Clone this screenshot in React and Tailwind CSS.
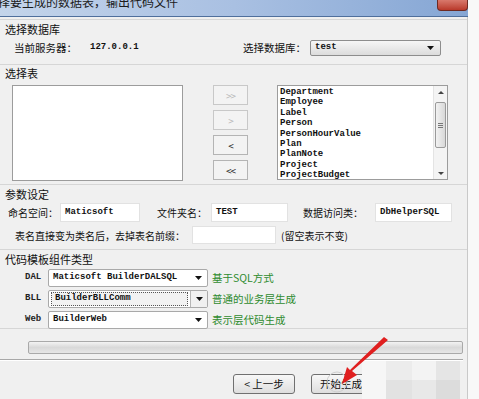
import React from "react";

const cjk = { fontFamily: '"Noto Sans CJK SC", "Noto Sans", sans-serif' };
const mono = { fontFamily: '"Liberation Mono", "DejaVu Sans Mono", monospace' };

const Arrow = () => (
  <svg width="7" height="4" viewBox="0 0 7 4" className="block">
    <path d="M0 0 H7 L3.5 4 Z" fill="#111" />
  </svg>
);

const GroupLabel = ({ children }) => (
  <div className="h-[14px] leading-[14px] text-[11px] text-[#111] pl-[5px] whitespace-nowrap" style={cjk}>
    {children}
  </div>
);

const TextBox = ({ w, h = "h-[19px]", value }) => (
  <div
    className={`${w} ${h} shrink-0 bg-white border border-[#e2e2e2] flex items-center pl-[4px] text-[9px] font-bold text-[#111] whitespace-nowrap`}
    style={mono}
  >
    {value}
  </div>
);

const MoveBtn = ({ label, disabled }) => (
  <div
    className={`h-[20px] w-[35px] border ${disabled ? "border-[#c8c8c8] text-[#b8b8b8]" : "border-[#b4b4b4] text-[#222]"} bg-[#f3f3f3] flex items-center justify-center text-[10px] tracking-[-1px]`}
    style={cjk}
  >
    {label}
  </div>
);

const TplRow = ({ name, value, note, focused }) => (
  <div className="flex items-center h-[18px] pl-[25px]">
    <div className="w-[23px] shrink-0 text-[9px] font-bold text-[#222]" style={mono}>
      {name}
    </div>
    <div className="w-[160px] shrink-0 h-[18px] bg-white border border-[#a9a9a9] rounded-[2px] flex items-center">
      {focused ? (
        <>
          <div className="flex-1 h-[14px] mx-[2px] border border-dotted border-[#555] bg-[#f2f2f2] flex items-center pl-[3px] text-[9px] font-bold text-[#111] whitespace-nowrap" style={mono}>
            {value}
          </div>
          <div className="w-[17px] h-[16px] border-l border-[#b5b5b5] bg-[#f0f0f0] flex items-center justify-center">
            <Arrow />
          </div>
        </>
      ) : (
        <>
          <div className="flex-1 pl-[4px] text-[9px] font-bold text-[#111] whitespace-nowrap" style={mono}>
            {value}
          </div>
          <div className="w-[17px] flex items-center justify-center">
            <Arrow />
          </div>
        </>
      )}
    </div>
    <div className="ml-[4px] text-[10.5px] text-[#2e8b2e] whitespace-nowrap" style={cjk}>
      {note}
    </div>
  </div>
);

const tables = [
  "Department",
  "Employee",
  "Label",
  "Person",
  "PersonHourValue",
  "Plan",
  "PlanNote",
  "Project",
  "ProjectBudget",
];

export default function App() {
  return (
    <div className="w-[479px] h-[399px] bg-[#f0f0f0] flex overflow-hidden relative">
      <div className="w-[468px] flex flex-col">
        {/* title bar */}
        <div className="h-[17px] relative overflow-hidden bg-gradient-to-r from-[#c3d4ea] via-[#a9c0e2] to-[#85a6d4] border-b border-[#4f6f9c]">
          <div className="-mt-[6px] -ml-[14px] text-[12px] leading-[16px] text-[#1b1b1b] whitespace-nowrap" style={cjk}>
            选择要生成的数据表，输出代码文件
          </div>
          <div className="absolute top-0 left-[437px] w-[31px] h-[11px] bg-gradient-to-b from-[#d8786c] to-[#b9382a] border border-t-0 border-[#6e2a22] rounded-b-[4px]" />
        </div>

        <div className="flex-1 flex flex-col border-r border-[#c9c9c9]">
          {/* group 1 */}
          <div className="h-[45px] border-t border-[#d6d6d6] mt-[2px] pt-[2px]">
            <GroupLabel>选择数据库</GroupLabel>
            <div className="flex items-center h-[16px] mt-[4px] pl-[14px] text-[10.5px] text-[#111] whitespace-nowrap" style={cjk}>
              <div className="w-[76px] shrink-0">当前服务器：</div>
              <div className="w-[153px] shrink-0 text-[9px] font-bold" style={mono}>127.0.0.1</div>
              <div className="w-[67px] shrink-0">选择数据库：</div>
              <div className="w-[131px] shrink-0 h-[16px] rounded-[2px] border border-[#8d8d8d] bg-gradient-to-b from-[#f6f6f6] to-[#dcdcdc] flex items-center pl-[4px] pr-[6px]">
                <div className="flex-1 text-[9px] font-bold" style={mono}>test</div>
                <Arrow />
              </div>
            </div>
          </div>

          {/* group 2 */}
          <div className="h-[120px] border-t border-[#d6d6d6] pt-[1px]">
            <GroupLabel>选择表</GroupLabel>
            <div className="flex mt-[5px] pl-[12px]">
              <div className="w-[171px] h-[96px] bg-white border border-[#9c9c9c]" />
              <div className="ml-[30px] flex flex-col gap-[5px]">
                <MoveBtn label=">>" disabled />
                <MoveBtn label=">" disabled />
                <MoveBtn label="<" />
                <MoveBtn label="<<" />
              </div>
              <div className="ml-[29px] w-[171px] h-[95px] bg-white border border-[#9c9c9c] flex">
                <div className="flex-1 pl-[2px] pt-[1px] text-[9px] font-bold leading-[10.4px] text-[#111]" style={mono}>
                  {tables.map((t) => (
                    <div key={t}>{t}</div>
                  ))}
                </div>
                <div className="w-[14px] bg-[#f4f4f4] border-l border-[#e4e4e4] flex flex-col items-center">
                  <div className="h-[12px] flex items-center">
                    <svg width="6" height="3" viewBox="0 0 6 3"><path d="M0 3 L3 0 L6 3 Z" fill="#444" /></svg>
                  </div>
                  <div className="w-[11px] h-[46px] mt-[4px] rounded-[2px] border border-[#9a9a9a] bg-gradient-to-r from-[#f2f2f2] to-[#d8d8d8] flex items-center justify-center">
                    <div className="w-[5px] h-[5px] border-y border-[#777] flex items-center"><div className="w-full h-px bg-[#777]" /></div>
                  </div>
                  <div className="flex-1" />
                  <div className="h-[12px] flex items-center">
                    <svg width="6" height="3" viewBox="0 0 6 3"><path d="M0 0 L6 0 L3 3 Z" fill="#444" /></svg>
                  </div>
                </div>
              </div>
            </div>
          </div>

          {/* group 3 */}
          <div className="h-[65px] border-t border-[#d6d6d6] pt-[2px]">
            <GroupLabel>参数设定</GroupLabel>
            <div className="flex items-center mt-[2px] pl-[8px] text-[10px] text-[#111] whitespace-nowrap" style={cjk}>
              <div className="w-[52px] shrink-0">命名空间：</div>
              <TextBox w="w-[80px]" value="Maticsoft" />
              <div className="w-[54px] shrink-0 ml-[17px]">文件夹名：</div>
              <TextBox w="w-[77px]" value="TEST" />
              <div className="w-[72px] shrink-0 ml-[15px]">数据访问类：</div>
              <TextBox w="w-[77px]" value="DbHelperSQL" />
            </div>
            <div className="flex items-center mt-[4px] pl-[15px] text-[10px] text-[#111] whitespace-nowrap" style={cjk}>
              <div className="w-[177px] shrink-0">表名直接变为类名后，去掉表名前缀：</div>
              <TextBox w="w-[84px]" h="h-[18px]" value="" />
              <div className="ml-[5px]">(留空表示不变)</div>
            </div>
          </div>

          {/* group 4 */}
          <div className="h-[80px] border-y border-[#d6d6d6] pt-[2px]">
            <GroupLabel>代码模板组件类型</GroupLabel>
            <div className="flex flex-col gap-[3px] mt-[3px]">
              <TplRow name="DAL" value="Maticsoft BuilderDALSQL" note="基于SQL方式" />
              <TplRow name="BLL" value="BuilderBLLComm" note="普通的业务层生成" focused />
              <TplRow name="Web" value="BuilderWeb" note="表示层代码生成" />
            </div>
          </div>

          {/* progress */}
          <div className="pl-[28px] mt-[12px]">
            <div className="w-[435px] h-[13px] rounded-[2px] border border-[#a9a9a9] bg-gradient-to-b from-[#f3f3f3] via-[#d9d9d9] to-[#e6e6e6]" />
          </div>
          <div className="mt-[5px] w-[463px] h-[2px] border-t border-[#a8a8a8] bg-white" />

          {/* buttons */}
          <div className="flex mt-[13px] pl-[233px]">
            <div className="w-[62px] h-[20px] rounded-[3px] border border-[#707070] bg-gradient-to-b from-[#f8f8f8] to-[#dedede] flex items-center justify-center text-[10.5px] text-[#111] whitespace-nowrap" style={cjk}>
              &lt; 上一步
            </div>
            <div className="ml-[16px] w-[62px] h-[20px] rounded-[3px] border border-[#707070] bg-gradient-to-b from-[#f8f8f8] to-[#dedede] flex items-center pl-[8px] text-[10.5px] text-[#111] whitespace-nowrap" style={cjk}>
              开始生成
            </div>
          </div>
        </div>
      </div>
      <div className="flex-1 bg-[#f8f8f8]" />

      {/* watermark blur */}
      <div className="absolute left-[362px] top-[361px] w-[98px] h-[38px] flex">
        <div className="w-[24px] bg-[#f6f6f6]" />
        <div className="w-[26px] flex flex-col">
          <div className="flex-1 bg-[#ececec]" />
          <div className="flex-1 bg-[#e2e2e2]" />
        </div>
        <div className="w-[24px] flex flex-col">
          <div className="flex-1 bg-[#f3f3f3]" />
          <div className="flex-1 bg-[#e8e8e8]" />
        </div>
        <div className="w-[24px] flex flex-col">
          <div className="flex-1 bg-[#e5e5e5]" />
          <div className="flex-1 bg-[#dcdcdc]" />
        </div>
      </div>

      {/* red arrow annotation */}
      <svg className="absolute left-0 top-0" width="479" height="399" viewBox="0 0 479 399">
        <circle cx="337" cy="382" r="10" fill="none" stroke="#cfcfcf" strokeWidth="1" />
        <path d="M384 337 L388 340 L352 371 L357 375 L342 384 L347 367 L350 370 Z" fill="#e01f1f" />
      </svg>
    </div>
  );
}
